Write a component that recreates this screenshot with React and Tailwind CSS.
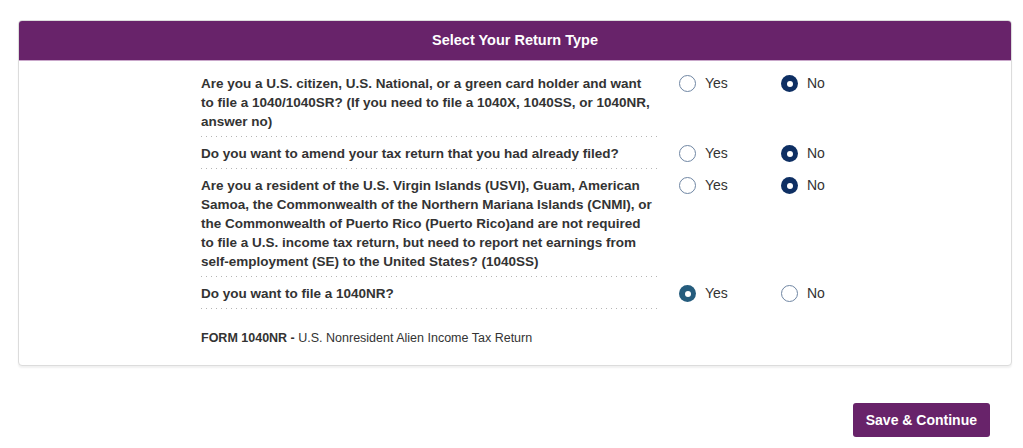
import { useState } from 'react';

const QUESTIONS = [
  {
    id: 'citizen',
    text: 'Are you a U.S. citizen, U.S. National, or a green card holder and want to file a 1040/1040SR? (If you need to file a 1040X, 1040SS, or 1040NR, answer no)',
    value: 'no',
  },
  {
    id: 'amend',
    text: 'Do you want to amend your tax return that you had already filed?',
    value: 'no',
  },
  {
    id: 'territory',
    text: 'Are you a resident of the U.S. Virgin Islands (USVI), Guam, American Samoa, the Commonwealth of the Northern Mariana Islands (CNMI), or the Commonwealth of Puerto Rico (Puerto Rico)and are not required to file a U.S. income tax return, but need to report net earnings from self-employment (SE) to the United States? (1040SS)',
    value: 'no',
  },
  {
    id: 'nr',
    text: 'Do you want to file a 1040NR?',
    value: 'yes',
    focused: true,
  },
];

function Radio({ checked, focused, label, onClick }) {
  return (
    <button type="button" onClick={onClick} className="flex h-[19px] items-center gap-[9px] text-left">
      {checked ? (
        <span
          className={`flex h-[17px] w-[17px] items-center justify-center rounded-full ${
            focused ? 'bg-[#255c7d]' : 'bg-[#0e2f63]'
          }`}
        >
          <span className="h-[6px] w-[6px] rounded-full bg-white" />
        </span>
      ) : (
        <span className="h-[17px] w-[17px] rounded-full border border-[#6f86a3] bg-white" />
      )}
      <span className="text-[14px] text-[#333]">{label}</span>
    </button>
  );
}

export default function App() {
  const [answers, setAnswers] = useState(
    Object.fromEntries(QUESTIONS.map((q) => [q.id, q.value])),
  );

  function set(id, v) {
    setAnswers((a) => ({ ...a, [id]: v }));
  }

  return (
    <div className="min-h-[448px] bg-white pt-[20px] font-['Liberation_Sans',Arial,sans-serif] text-[#333]">
      <div className="ml-[18px] w-[994px] rounded-[4px] border border-[#dcdcdc] bg-white shadow-[0_2px_2px_rgba(0,0,0,0.06)]">
        <div className="flex h-[40px] items-center justify-center rounded-t-[3px] border-b border-[#c9a7ca] bg-[#68236a]">
          <h2 className="text-[14.5px] font-bold text-white">Select Your Return Type</h2>
        </div>

        <div className="pl-[182px] pt-[6px]">
          {QUESTIONS.map((q) => (
            <div key={q.id} className="flex">
              <div className="w-[460px]">
                <p className="pb-[5px] pr-[5px] pt-[7px] text-[13.5px] font-bold leading-[19px] text-[#333]">{q.text}</p>
                <div className="h-px bg-[linear-gradient(to_right,#b5b5b5_1px,transparent_1px)] bg-[length:5px_1px]" />
              </div>
              <div className="ml-[18px] flex pt-[7px]">
                <div className="w-[102px]">
                  <Radio
                    label="Yes"
                    checked={answers[q.id] === 'yes'}
                    focused={q.focused}
                    onClick={() => set(q.id, 'yes')}
                  />
                </div>
                <Radio
                  label="No"
                  checked={answers[q.id] === 'no'}
                  focused={q.focused}
                  onClick={() => set(q.id, 'no')}
                />
              </div>
            </div>
          ))}

          <p className="pb-[18px] pt-[20px] text-[12.5px] leading-[18px] text-[#333]">
            <span className="font-bold">FORM 1040NR - </span>U.S. Nonresident Alien Income Tax Return
          </p>
        </div>
      </div>

      <div className="mr-[33px] mt-[37px] flex justify-end">
        <button
          type="button"
          className="h-[34px] rounded-[3px] bg-[#68236a] px-[13px] text-[14px] font-bold text-white"
        >
          Save &amp; Continue
        </button>
      </div>
    </div>
  );
}
